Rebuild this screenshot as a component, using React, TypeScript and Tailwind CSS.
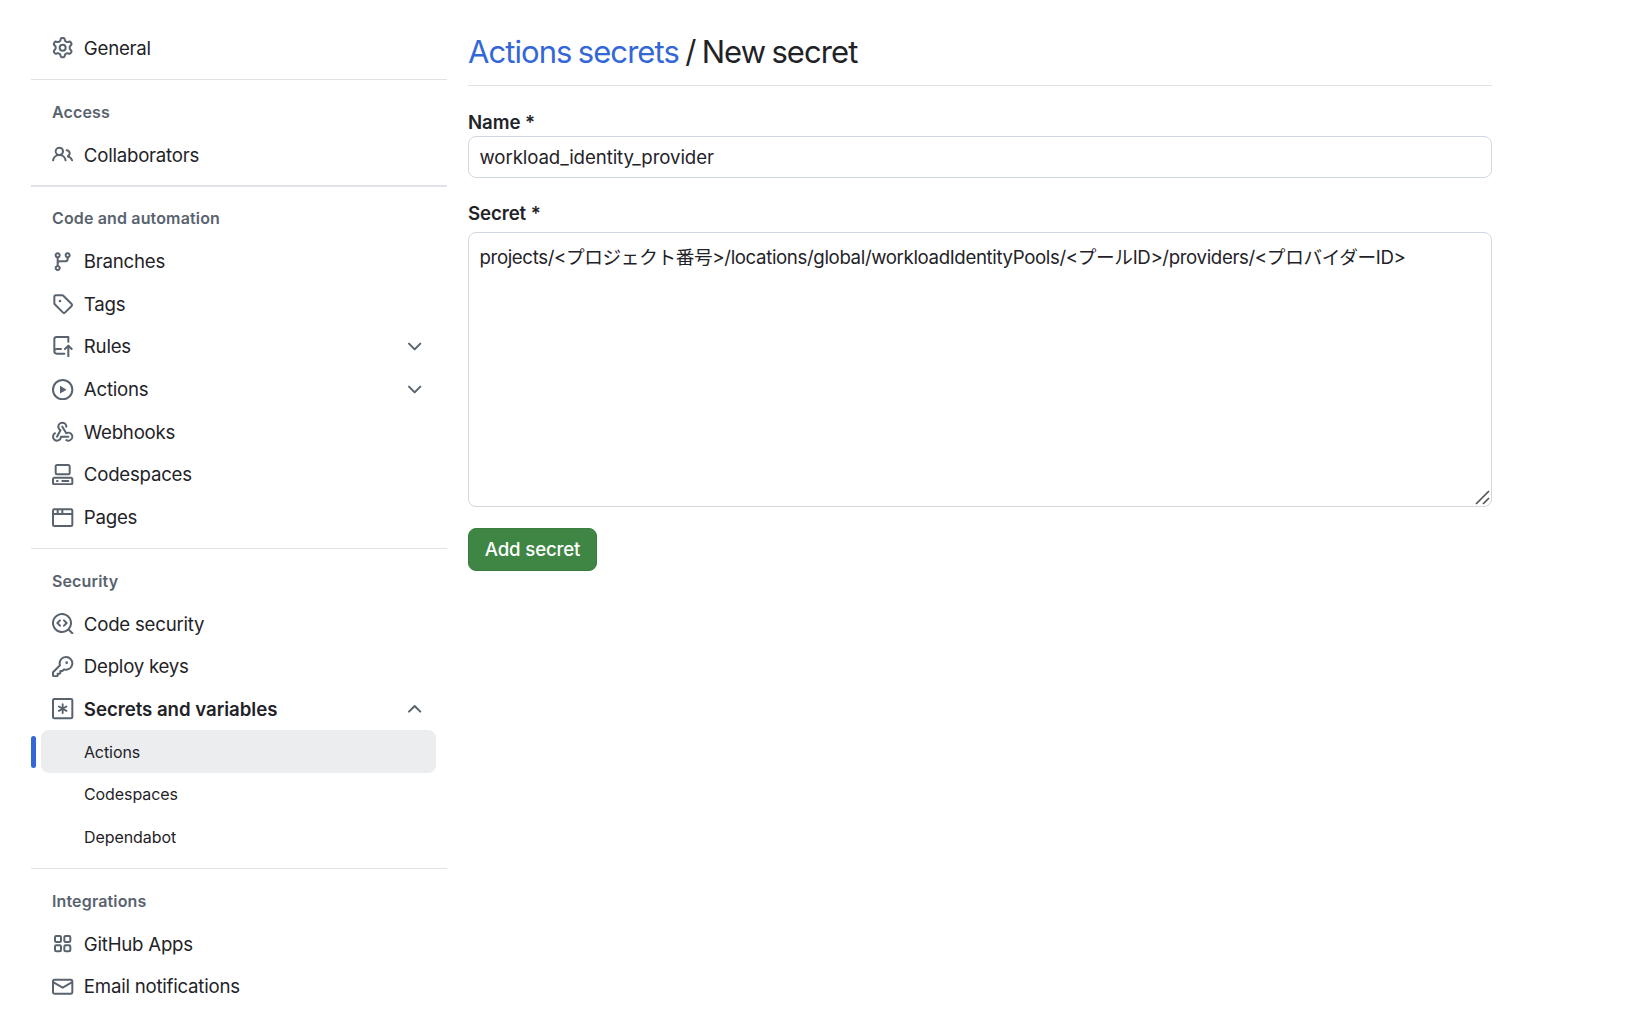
import { useState, type ReactNode } from 'react'
import clsx from 'clsx'

const icons: Record<string, ReactNode> = {
  gear: (
    <path d="M8 0a8.2 8.2 0 0 1 .701.031C9.444.095 9.99.645 10.16 1.29l.288 1.107c.018.066.079.158.212.224.231.114.454.243.668.386.123.082.233.09.299.071l1.103-.303c.644-.176 1.392.021 1.82.63.27.385.506.792.704 1.218.315.675.111 1.422-.364 1.891l-.814.806c-.049.048-.098.147-.088.294.016.257.016.515 0 .772-.01.147.038.246.088.294l.814.806c.475.469.679 1.216.364 1.891a7.977 7.977 0 0 1-.704 1.217c-.428.61-1.176.807-1.82.63l-1.102-.302c-.067-.019-.177-.011-.3.071a5.909 5.909 0 0 1-.668.386c-.133.066-.194.158-.211.224l-.29 1.106c-.168.646-.715 1.196-1.458 1.26a8.006 8.006 0 0 1-1.402 0c-.743-.064-1.289-.614-1.458-1.26l-.289-1.106c-.018-.066-.079-.158-.212-.224a5.738 5.738 0 0 1-.668-.386c-.123-.082-.233-.09-.299-.071l-1.103.303c-.644.176-1.392-.021-1.82-.63a8.12 8.12 0 0 1-.704-1.218c-.315-.675-.111-1.422.363-1.891l.815-.806c.05-.048.098-.147.088-.294a6.214 6.214 0 0 1 0-.772c.01-.147-.038-.246-.088-.294l-.815-.806C.635 6.045.431 5.298.746 4.623a7.92 7.92 0 0 1 .704-1.217c.428-.61 1.176-.807 1.82-.63l1.102.302c.067.019.177.011.3-.071.214-.143.437-.272.668-.386.133-.066.194-.158.211-.224l.29-1.106C6.009.645 6.556.095 7.299.03 7.53.01 7.764 0 8 0Zm-.571 1.525c-.036.003-.108.036-.137.146l-.289 1.105c-.147.561-.549.967-.998 1.189-.173.086-.34.183-.5.29-.417.278-.97.423-1.529.27l-1.103-.303c-.109-.03-.175.016-.195.045-.22.312-.412.644-.573.99-.014.031-.021.11.059.19l.815.806c.411.406.562.957.53 1.456a4.709 4.709 0 0 0 0 .582c.032.499-.119 1.05-.53 1.456l-.815.806c-.081.08-.073.159-.059.19.162.346.353.677.573.989.02.03.085.076.195.046l1.102-.303c.56-.153 1.113-.008 1.53.27.161.107.328.204.501.29.447.222.85.629.997 1.189l.289 1.105c.029.109.101.143.137.146a6.6 6.6 0 0 0 1.142 0c.036-.003.108-.036.137-.146l.289-1.105c.147-.561.549-.967.998-1.189.173-.086.34-.183.5-.29.417-.278.97-.423 1.529-.27l1.103.303c.109.029.175-.016.195-.045.22-.313.411-.644.573-.99.014-.031.021-.11-.059-.19l-.815-.806c-.411-.406-.562-.957-.53-1.456a4.709 4.709 0 0 0 0-.582c-.032-.499.119-1.05.53-1.456l.815-.806c.081-.08.073-.159.059-.19a6.464 6.464 0 0 0-.573-.989c-.02-.03-.085-.076-.195-.046l-1.102.303c-.56.153-1.113.008-1.53-.27a4.44 4.44 0 0 0-.501-.29c-.447-.222-.85-.629-.997-1.189l-.289-1.105c-.029-.11-.101-.143-.137-.146a6.6 6.6 0 0 0-1.142 0ZM11 8a3 3 0 1 1-6 0 3 3 0 0 1 6 0ZM9.5 8a1.5 1.5 0 1 0-3.001.001A1.5 1.5 0 0 0 9.5 8Z" />
  ),
  people: (
    <path d="M2 5.5a3.5 3.5 0 1 1 5.898 2.549 5.508 5.508 0 0 1 3.034 4.084.75.75 0 1 1-1.482.235 4 4 0 0 0-7.9 0 .75.75 0 0 1-1.482-.236A5.507 5.507 0 0 1 3.102 8.05 3.493 3.493 0 0 1 2 5.5ZM11 4a3.001 3.001 0 0 1 2.22 5.018 5.01 5.01 0 0 1 2.56 3.012.749.749 0 0 1-.885.954.752.752 0 0 1-.549-.514 3.507 3.507 0 0 0-2.522-2.372.75.75 0 0 1-.574-.73v-.352a.75.75 0 0 1 .416-.672A1.5 1.5 0 0 0 11 5.5.75.75 0 0 1 11 4Zm-5.5-.5a2 2 0 1 0-.001 3.999A2 2 0 0 0 5.5 3.5Z" />
  ),
  branch: (
    <path d="M9.5 3.25a2.25 2.25 0 1 1 3 2.122V6A2.5 2.5 0 0 1 10 8.5H6a1 1 0 0 0-1 1v1.128a2.251 2.251 0 1 1-1.5 0V5.372a2.25 2.25 0 1 1 1.5 0v1.836A2.493 2.493 0 0 1 6 7h4a1 1 0 0 0 1-1v-.628A2.25 2.25 0 0 1 9.5 3.25Zm-6 0a.75.75 0 1 0 1.5 0 .75.75 0 0 0-1.5 0Zm8.25-.75a.75.75 0 1 0 0 1.5.75.75 0 0 0 0-1.5ZM4.25 12a.75.75 0 1 0 0 1.5.75.75 0 0 0 0-1.5Z" />
  ),
  tag: (
    <path d="M1 7.775V2.75C1 1.784 1.784 1 2.75 1h5.025c.464 0 .91.184 1.238.513l6.25 6.25a1.75 1.75 0 0 1 0 2.474l-5.026 5.026a1.75 1.75 0 0 1-2.474 0l-6.25-6.25A1.752 1.752 0 0 1 1 7.775Zm1.5 0c0 .066.026.13.073.177l6.25 6.25a.25.25 0 0 0 .354 0l5.025-5.025a.25.25 0 0 0 0-.354l-6.25-6.25a.25.25 0 0 0-.177-.073H2.75a.25.25 0 0 0-.25.25ZM6 5a1 1 0 1 1 0 2 1 1 0 0 1 0-2Z" />
  ),
  repoPush: (
    <path d="M1 2.5A2.5 2.5 0 0 1 3.5 0h8.75a.75.75 0 0 1 .75.75v3.5a.75.75 0 0 1-1.5 0V1.5h-8a1 1 0 0 0-1 1v6.708A2.493 2.493 0 0 1 3.5 9h3.25a.75.75 0 0 1 0 1.5H3.5a1 1 0 0 0 0 2h5.75a.75.75 0 0 1 0 1.5H3.5A2.5 2.5 0 0 1 1 11.5Zm13.23 7.79-1.224-1.224v6.184a.75.75 0 0 1-1.5 0V9.066L10.28 10.29a.75.75 0 0 1-1.06-1.061l2.505-2.504a.75.75 0 0 1 1.06 0L15.29 9.23a.751.751 0 0 1-.018 1.042.751.751 0 0 1-1.042.018Z" />
  ),
  play: (
    <path d="M8 0a8 8 0 1 1 0 16A8 8 0 0 1 8 0ZM1.5 8a6.5 6.5 0 1 0 13 0 6.5 6.5 0 0 0-13 0Zm4.879-2.773 4.264 2.559a.25.25 0 0 1 0 .428l-4.264 2.559A.25.25 0 0 1 6 10.559V5.442a.25.25 0 0 1 .379-.215Z" />
  ),
  webhook: (
    <>
      <path d="M5.5 4.25a2.25 2.25 0 0 1 4.5 0 .75.75 0 0 0 1.5 0 3.75 3.75 0 1 0-6.14 2.889l-2.272 4.258a.75.75 0 0 0 1.324.706L7 7.25a.75.75 0 0 0-.309-1.015A2.25 2.25 0 0 1 5.5 4.25Z" />
      <path d="M7.364 3.607a.75.75 0 0 1 1.03.257l2.608 4.349a3.75 3.75 0 1 1-.628 6.785.75.75 0 0 1 .752-1.299 2.25 2.25 0 1 0-.033-3.88.75.75 0 0 1-1.03-.256L7.107 4.636a.75.75 0 0 1 .257-1.03Z" />
      <path d="M2.9 8.776A.75.75 0 0 1 2.625 9.8 2.25 2.25 0 1 0 6 11.75a.75.75 0 0 1 .75-.751h5.5a.75.75 0 0 1 0 1.5H7.425a3.751 3.751 0 1 1-5.55-3.998.75.75 0 0 1 1.024.274Z" />
    </>
  ),
  codespaces: (
    <>
      <path d="M0 11.25c0-.966.784-1.75 1.75-1.75h12.5c.966 0 1.75.784 1.75 1.75v3A1.75 1.75 0 0 1 14.25 16H1.75A1.75 1.75 0 0 1 0 14.25Zm2-9.5C2 .784 2.784 0 3.75 0h8.5C13.216 0 14 .784 14 1.75v5a1.75 1.75 0 0 1-1.75 1.75h-8.5A1.75 1.75 0 0 1 2 6.75Zm1.75-.25a.25.25 0 0 0-.25.25v5c0 .138.112.25.25.25h8.5a.25.25 0 0 0 .25-.25v-5a.25.25 0 0 0-.25-.25Zm-2 9.5a.25.25 0 0 0-.25.25v3c0 .138.112.25.25.25h12.5a.25.25 0 0 0 .25-.25v-3a.25.25 0 0 0-.25-.25Z" />
      <path d="M7 12.75a.75.75 0 0 1 .75-.75h4.5a.75.75 0 0 1 0 1.5h-4.5a.75.75 0 0 1-.75-.75Zm-4 0a.75.75 0 0 1 .75-.75h.5a.75.75 0 0 1 0 1.5h-.5a.75.75 0 0 1-.75-.75Z" />
    </>
  ),
  browser: (
    <path d="M0 2.75C0 1.784.784 1 1.75 1h12.5c.966 0 1.75.784 1.75 1.75v10.5A1.75 1.75 0 0 1 14.25 15H1.75A1.75 1.75 0 0 1 0 13.25ZM14.5 6h-13v7.25c0 .138.112.25.25.25h12.5a.25.25 0 0 0 .25-.25Zm-6-3.5v2h6V2.75a.25.25 0 0 0-.25-.25ZM5 2.5v2h2v-2Zm-3.25 0a.25.25 0 0 0-.25.25V4.5h2v-2Z" />
  ),
  codescan: (
    <>
      <path d="M8.47 4.97a.75.75 0 0 0 0 1.06L9.94 7.5 8.47 8.97a.75.75 0 1 0 1.06 1.06l2-2a.75.75 0 0 0 0-1.06l-2-2a.75.75 0 0 0-1.06 0ZM6.53 6.03a.75.75 0 0 0-1.06-1.06l-2 2a.75.75 0 0 0 0 1.06l2 2a.75.75 0 1 0 1.06-1.06L5.06 7.5l1.47-1.47Z" />
      <path d="M12.246 13.307a7.501 7.501 0 1 1 1.06-1.06l2.474 2.473a.749.749 0 0 1-.326 1.275.749.749 0 0 1-.734-.215ZM1.5 7.5a6.002 6.002 0 0 0 3.608 5.504 6.002 6.002 0 0 0 6.486-1.117.748.748 0 0 1 .292-.293A6 6 0 1 0 1.5 7.5Z" />
    </>
  ),
  key: (
    <path d="M10.5 0a5.499 5.499 0 1 1-1.288 10.848l-.932.932a.749.749 0 0 1-.53.22H7v.75a.749.749 0 0 1-.22.53l-.5.5a.749.749 0 0 1-.53.22H5v.75a.749.749 0 0 1-.22.53l-.5.5a.749.749 0 0 1-.53.22h-2A1.75 1.75 0 0 1 0 14.25v-2c0-.199.079-.389.22-.53l4.932-4.932A5.5 5.5 0 0 1 10.5 0Zm-4 5.5c-.001.431.069.86.205 1.269a.75.75 0 0 1-.181.768L1.5 12.56v1.69c0 .138.112.25.25.25h1.69l.06-.06v-1.19a.75.75 0 0 1 .75-.75h1.19l.06-.06v-1.19a.75.75 0 0 1 .75-.75h1.19l1.023-1.025a.75.75 0 0 1 .768-.18A4 4 0 1 0 6.5 5.5ZM11 6a1 1 0 1 1 0-2 1 1 0 0 1 0 2Z" />
  ),
  asterisk: (
    <g fill="none" stroke="currentColor" strokeLinecap="round">
      <rect x="0.75" y="0.75" width="14.5" height="14.5" rx="1" strokeWidth="1.5" />
      <path d="M8 4.7v6.6M5.15 6.35l5.7 3.3M10.85 6.35l-5.7 3.3" strokeWidth="1.4" />
    </g>
  ),
  apps: (
    <g fill="none" stroke="currentColor" strokeWidth="1.5">
      <rect x="2.25" y="2.25" width="4.5" height="4.5" rx="1" />
      <rect x="9.25" y="2.25" width="4.5" height="4.5" rx="1" />
      <rect x="2.25" y="9.25" width="4.5" height="4.5" rx="1" />
      <rect x="9.25" y="9.25" width="4.5" height="4.5" rx="1" />
    </g>
  ),
  mail: (
    <path d="M1.75 2h12.5c.966 0 1.75.784 1.75 1.75v8.5A1.75 1.75 0 0 1 14.25 14H1.75A1.75 1.75 0 0 1 0 12.25v-8.5C0 2.784.784 2 1.75 2ZM1.5 12.251c0 .138.112.25.25.25h12.5a.25.25 0 0 0 .25-.25V5.809L8.38 9.397a.75.75 0 0 1-.76 0L1.5 5.809v6.442Zm13-8.181v-.32a.25.25 0 0 0-.25-.25H1.75a.25.25 0 0 0-.25.25v.32L8 7.88Z" />
  ),
  chevron: (
    <path d="M12.78 5.22a.749.749 0 0 1 0 1.06l-4.25 4.25a.749.749 0 0 1-1.06 0L3.22 6.28a.749.749 0 1 1 1.06-1.06L8 8.939l3.72-3.719a.749.749 0 0 1 1.06 0Z" />
  ),
}

function Icon({ name, className }: { name: string; className?: string }) {
  return (
    <svg viewBox="0 0 16 16" fill="currentColor" className={clsx('size-[21.33px] shrink-0 text-[#59636e]', className)}>
      {icons[name]}
    </svg>
  )
}

interface Item {
  label: string
  icon: string
  expandable?: boolean
  children?: string[]
}

const sections: { title?: string; items: Item[] }[] = [
  { items: [{ label: 'General', icon: 'gear' }] },
  { title: 'Access', items: [{ label: 'Collaborators', icon: 'people' }] },
  {
    title: 'Code and automation',
    items: [
      { label: 'Branches', icon: 'branch' },
      { label: 'Tags', icon: 'tag' },
      { label: 'Rules', icon: 'repoPush', expandable: true },
      { label: 'Actions', icon: 'play', expandable: true },
      { label: 'Webhooks', icon: 'webhook' },
      { label: 'Codespaces', icon: 'codespaces' },
      { label: 'Pages', icon: 'browser' },
    ],
  },
  {
    title: 'Security',
    items: [
      { label: 'Code security', icon: 'codescan' },
      { label: 'Deploy keys', icon: 'key' },
      {
        label: 'Secrets and variables',
        icon: 'asterisk',
        expandable: true,
        children: ['Actions', 'Codespaces', 'Dependabot'],
      },
    ],
  },
  {
    title: 'Integrations',
    items: [
      { label: 'GitHub Apps', icon: 'apps' },
      { label: 'Email notifications', icon: 'mail' },
    ],
  },
]

function NavItem({ item }: { item: Item }) {
  return (
    <li>
      <a className="flex h-[42.667px] items-center px-[10.67px] cursor-pointer">
        <Icon name={item.icon} />
        <span
          className={clsx(
            'ml-[10.2px] flex-1 pt-[1.8px]',
            item.children ? 'font-semibold tracking-[-0.04px]' : 'tracking-[-0.24px]'
          )}
        >
          {item.label}
        </span>
        {item.expandable && <Icon name="chevron" className={item.children && 'rotate-180'} />}
      </a>
      {item.children && (
        <ul>
          {item.children.map((child) => (
            <SubItem key={child} label={child} selected={child === 'Actions'} />
          ))}
        </ul>
      )}
    </li>
  )
}

function SubItem({ label, selected }: { label: string; selected: boolean }) {
  return (
    <li
      className={clsx(
        'relative -ml-[0.67px] flex h-[42.667px] items-center rounded-lg pl-[42.9px] text-base tracking-[-0.06px]',
        selected && 'bg-[#ecedef]'
      )}
    >
      {selected && <span className="absolute -left-[10px] top-[5.33px] h-8 w-[5.33px] rounded-lg bg-[#3467d6]" />}
      {label}
    </li>
  )
}

function Sidebar() {
  return (
    <nav className="w-[416px] shrink-0">
      {sections.map((section, i) => (
        <section key={section.title ?? 'top'}>
          {i > 0 && (
            <div className="pt-[9.333px] pb-[10.667px]">
              <div className="h-[1.333px] bg-[#dfe2e6]" />
            </div>
          )}
          <div className="px-[10.67px]">
            {section.title && (
              <h3 className="flex h-[42.667px] items-center px-[10.3px] pb-[0.6px] text-base leading-[28px] font-semibold tracking-[0.15px] text-[#59636e]">
                {section.title}
              </h3>
            )}
            <ul>
              {section.items.map((item) => (
                <NavItem key={item.label} item={item} />
              ))}
            </ul>
          </div>
        </section>
      ))}
    </nav>
  )
}

function SecretForm() {
  const [name, setName] = useState('workload_identity_provider')
  const [secret, setSecret] = useState(
    'projects/<プロジェクト番号>/locations/global/workloadIdentityPools/<プールID>/providers/<プロバイダーID>'
  )

  return (
    <main className="w-[1024px] pt-[4px]">
      <h2 className="h-[55px] border-b border-[#dfe2e6] text-[31px] leading-[41px] tracking-[-0.93px] [word-spacing:-1.5px]">
        <a className="text-[#3467d6]">Actions secrets</a> / New secret
      </h2>
      <label className="mt-[22px] flex h-[28px] items-center pt-[2px] font-semibold tracking-[-0.1px]">Name *</label>
      <input
        value={name}
        onChange={(e) => setName(e.target.value)}
        className="block h-[42px] w-full rounded-lg border border-[#d1d7df] px-[10.5px] pt-[2px] tracking-[-0.1px] outline-none"
      />
      <label className="mt-[21px] flex h-[28px] items-center pt-[2px] font-semibold tracking-[-0.1px]">Secret *</label>
      <div className="relative mt-[5px]">
        <textarea
          value={secret}
          onChange={(e) => setSecret(e.target.value)}
          spellCheck={false}
          className="block h-[275px] w-full resize-none rounded-lg border border-[#d1d7df] px-[10.5px] py-[11px] leading-[28px] tracking-[-0.37px] outline-none"
        />
        <svg
          viewBox="0 0 16 16"
          className="absolute right-px bottom-[2px] size-4 text-[#555]"
          fill="none"
          stroke="currentColor"
          strokeWidth="1.7"
        >
          <path d="M1 15 14 2M8 15l6-6" />
        </svg>
      </div>
      <button className="mt-[21px] h-[43px] w-[129px] rounded-lg border border-[#3a7d3f] bg-[#3f8645] pt-[2px] font-medium tracking-[-0.15px] text-white">
        Add secret
      </button>
    </main>
  )
}

export default function App() {
  return (
    <div className="flex h-[1024px] gap-[21px] overflow-hidden bg-white pt-[26.667px] pl-[31px] font-['Inter','Noto_Sans_CJK_JP',sans-serif] text-[18.667px] leading-[28px] text-[#1f2328]">
      <Sidebar />
      <SecretForm />
    </div>
  )
}
